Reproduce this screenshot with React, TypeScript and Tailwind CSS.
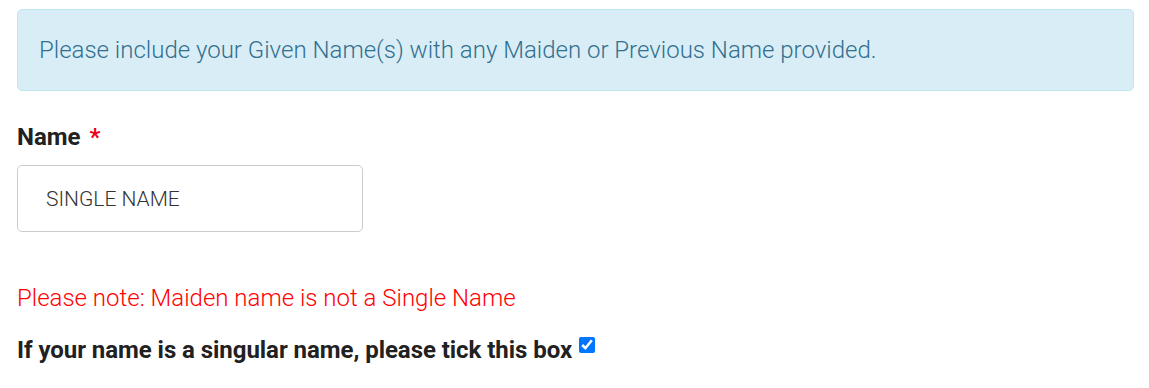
import { useState } from 'react'

export default function App() {
  const [name, setName] = useState('SINGLE NAME')
  const [single, setSingle] = useState(true)

  return (
    <div className="min-h-[388px] bg-white pl-[17px] pr-[15px] pt-[9px] font-['Roboto',sans-serif]">
      {/* info alert */}
      <div className="rounded-[5px] border border-[#bce8f1] bg-[#d9edf7] px-[21px] py-[24px] text-[24px] font-light leading-[32px] text-[#31708f]">
        Please include your Given Name(s) with any Maiden or Previous Name provided.
      </div>

      <label htmlFor="name" className="mt-[28px] block text-[24px] font-bold leading-[36px] text-[#212121]">
        Name <span className="ml-[3px] text-[#e8001c]">*</span>
      </label>

      <input
        id="name"
        value={name}
        onChange={(e) => setName(e.target.value)}
        className="mt-[10px] block h-[67px] w-[346px] rounded-[5px] border border-[#cccccc] bg-white px-[28px] text-[21px] font-light text-[#333333] outline-none"
      />

      <p className="mt-[48px] text-[24px] font-light leading-[36px] text-[#ff0000]">
        Please note: Maiden name is not a Single Name
      </p>

      <label className="mt-[16px] block text-[24px] font-bold leading-[36px] tracking-[-0.05px] text-[#212121]">
        If your name is a singular name, please tick this box
        <input
          type="checkbox"
          checked={single}
          onChange={(e) => setSingle(e.target.checked)}
          className="ml-[7px] mt-[5px] h-[16px] w-[16px] align-top"
        />
      </label>
    </div>
  )
}
